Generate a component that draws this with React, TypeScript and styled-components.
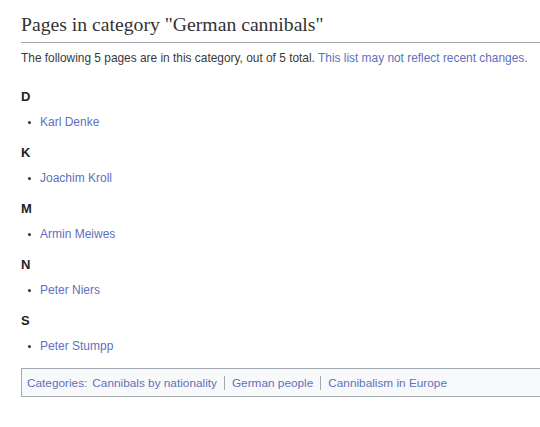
import React from "react";
import styled, { createGlobalStyle } from "styled-components";

const Global = createGlobalStyle`
  html, body { margin: 0; padding: 0; background: #fff; }
  body { font-family: "Liberation Sans", Arial, sans-serif; color: #222; }
`;

const Page = styled.div`
  padding: 12px 0 0 21px;
  overflow: hidden;
`;

const Title = styled.h2`
  margin: 0;
  font-family: "Liberation Serif", "Times New Roman", serif;
  font-weight: normal;
  font-size: 19.7px;
  line-height: 25px;
  color: #333;
  padding-bottom: 5px;
  border-bottom: 1px solid #a2a9b1;
`;

const Intro = styled.p`
  margin: 6px 0 0 0;
  font-size: 11.9px;
  line-height: 18px;
  color: #3a3a3a;
`;

const Link = styled.a`
  color: #6070c0;
  text-decoration: none;
`;

const Group = styled.div`
  margin-top: ${(p: { first?: boolean }) => (p.first ? "20px" : "11px")};
`;

const Letter = styled.h3`
  margin: 0;
  font-size: 13px;
  line-height: 20px;
  font-weight: bold;
  color: #222;
`;

const List = styled.ul`
  margin: 5px 0 0 0;
  padding: 0 0 0 19px;
  list-style: none;
`;

const Item = styled.li`
  position: relative;
  font-size: 12px;
  line-height: 20px;
  &::before {
    content: "";
    position: absolute;
    left: -12px;
    top: 9px;
    width: 3px;
    height: 3px;
    background: #333;
    border-radius: 50%;
  }
`;

const CatBox = styled.div`
  margin-top: 12px;
  margin-right: -4px;
  border: 1px solid #a2a9b1;
  border-right: none;
  background: #f8f9fa;
  padding: 5px 5px 4px;
  font-size: 11.8px;
  line-height: 18px;
  display: flex;
  align-items: center;
`;

const CatLabel = styled(Link)`
  margin-right: 5px;
`;

const CatLink = styled(Link)`
  padding: 0 7px;
  border-left: 1px solid #a2a9b1;
  line-height: 12px;
  &:first-of-type { border-left: none; padding-left: 0; }
`;

const groups = [
  ["D", "Karl Denke"],
  ["K", "Joachim Kroll"],
  ["M", "Armin Meiwes"],
  ["N", "Peter Niers"],
  ["S", "Peter Stumpp"],
];

export default function App() {
  return (
    <>
      <Global />
      <Page>
        <Title>Pages in category "German cannibals"</Title>
        <Intro>
          The following 5 pages are in this category, out of 5 total.{" "}
          <Link href="#">This list may not reflect recent changes.</Link>
        </Intro>
        {groups.map(([l, n], i) => (
          <Group key={l} first={i === 0}>
            <Letter>{l}</Letter>
            <List>
              <Item>
                <Link href="#">{n}</Link>
              </Item>
            </List>
          </Group>
        ))}
        <CatBox>
          <CatLabel href="#">Categories:</CatLabel>
          <span>
            <CatLink href="#">Cannibals by nationality</CatLink>
            <CatLink href="#">German people</CatLink>
            <CatLink href="#">Cannibalism in Europe</CatLink>
          </span>
        </CatBox>
      </Page>
    </>
  );
}
